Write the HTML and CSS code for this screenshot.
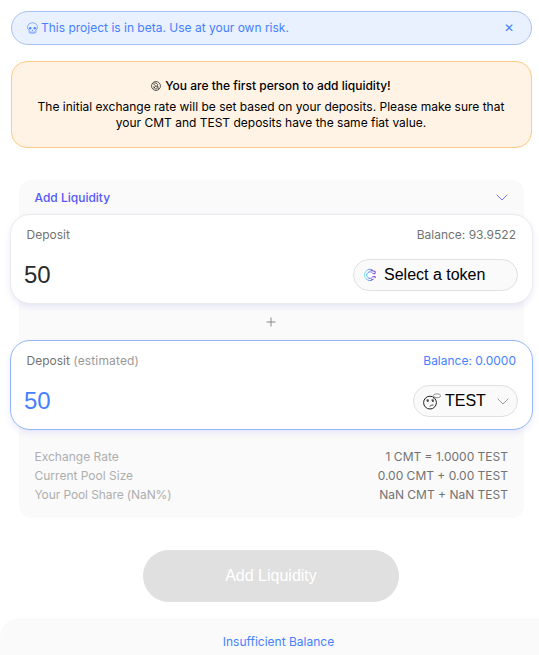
FILE: index.html
```html
<!DOCTYPE html>
<html lang="en">
<head>
<meta charset="utf-8">
<title>Add Liquidity</title>
<link rel="stylesheet" href="styles.css">
</head>
<body>
<main class="page">
  <div class="beta">
    <div class="beta-text">
      <svg class="skull" viewBox="0 0 11 12" fill="none" stroke="currentColor" stroke-width=".6"><path d="M2.3 8 1 7.2Q.3 5.8.7 4 1.7.8 5.5.7 9.3.8 10.3 4q.4 1.8-.3 3.2L8.7 8 9 10.3 7.6 11.2H3.4L2 10.3Z"/><path d="M3.4 9.3v1.4M4.8 9.6v1.3M6.2 9.6v1.3M7.6 9.3v1.4"/><path d="M2.3 5.5h1.8v1.5H2.3zM6.9 5.5h1.8v1.5H6.9zM5.2 8h.6v.6h-.6z" fill="currentColor"/></svg>
      <span>This project is in beta. Use at your own risk.</span>
    </div>
    <span class="close">✕</span>
  </div>

  <section class="notice">
    <h2 class="notice-title">
      <svg class="badge" viewBox="0 0 11 11" fill="none" stroke="currentColor" stroke-width=".7"><circle cx="5.5" cy="5.5" r="4.9"/><path d="M2 2.5 8.8 9M3 8.2 5 5.7M3.5 2.2h2l2 1.8-1 1.5L8.7 7M2.2 6.1 5 8.6H7"/></svg>
      <span>You are the first person to add liquidity!</span>
    </h2>
    <p class="notice-text">The initial exchange rate will be set based on your deposits. Please make sure that your CMT and TEST deposits have the same fiat value.</p>
  </section>

  <section class="panel">
    <header class="mode">
      <span>Add Liquidity</span>
      <svg class="chevron" viewBox="0 0 12 7" fill="none" stroke="currentColor"><path d="M.7.7 6 6 11.3.7"/></svg>
    </header>

    <div class="card">
      <div class="card-head"><span>Deposit</span><span>Balance: 93.9522</span></div>
      <div class="card-row">
        <span class="amount">50</span>
        <button class="token token-wide">
          <svg class="coin" viewBox="0 0 14 14" fill="none">
            <defs><linearGradient id="coin" x1="1" y1="7" x2="13" y2="7" gradientUnits="userSpaceOnUse"><stop stop-color="#63e1f2"/><stop offset=".5" stop-color="#527ae8"/><stop offset="1" stop-color="#8b20c9"/></linearGradient></defs>
            <circle cx="7" cy="7" r="7" fill="#fff"/>
            <path d="M9.8 2.2A5.5 5.5 0 1 0 10.4 11.2" stroke="url(#coin)" stroke-width=".9"/>
            <path d="M9.7 5.2A3.3 3.3 0 1 0 9.7 9" stroke="url(#coin)" stroke-width="1"/>
            <path d="M7.5 2.2 10.8 3.2M10.6 3.2h1.5v2.5H10M9.6 8.6h2.6v1.6M8 12.1l2.5-1" stroke="url(#coin)" stroke-width="1"/>
          </svg>
          <span>Select a token</span>
        </button>
      </div>
    </div>

    <div class="plus"><svg viewBox="0 0 10 10" stroke="currentColor"><path d="M5 .5v9M.5 5h9"/></svg></div>

    <div class="card card-active">
      <div class="card-head"><span>Deposit <span class="hint">(estimated)</span></span><span class="blue">Balance: 0.0000</span></div>
      <div class="card-row">
        <span class="amount blue">50</span>
        <button class="token">
          <svg class="face" viewBox="0 0 18 17" fill="none" stroke="#222"><circle cx="7" cy="9.6" r="6.4"/><ellipse cx="14" cy="2.8" rx="3.6" ry="2" fill="#fafafa" stroke="#777" stroke-width=".8"/><path d="m11.2 4.4-1.2 1" stroke-width=".7"/><path d="M3.2 7.2q1.3-1 2.6 0M8.3 7.2q1.3-1 2.6 0M6.7 13.4q1.8-1.7 3.8-1.4" stroke-width=".8"/><path d="M3.9 7.3h1.7v1.4H3.9zM9 7.3h1.7v1.4H9z" fill="#222" stroke="none"/></svg>
          <span>TEST</span>
          <svg class="chevron token-chevron" viewBox="0 0 12 7" fill="none" stroke="currentColor"><path d="M.7.7 6 6 11.3.7"/></svg>
        </button>
      </div>
    </div>

    <dl class="summary">
      <div><dt>Exchange Rate</dt><dd>1 CMT = 1.0000 TEST</dd></div>
      <div><dt>Current Pool Size</dt><dd>0.00 CMT + 0.00 TEST</dd></div>
      <div><dt class="share">Your Pool Share (NaN%)</dt><dd>NaN CMT + NaN TEST</dd></div>
    </dl>
  </section>

  <button class="submit">Add Liquidity</button>
</main>
<footer class="status">Insufficient Balance</footer>
</body>
</html>
```
FILE: styles.css
```css
* { box-sizing: border-box; }
body {
  margin: 0;
  height: 655px;
  overflow: hidden;
  background: #fff;
  color: #000;
  font: 12px/16px Inter, "Liberation Sans", sans-serif;
}
.page { display: flex; flex-direction: column; padding: 11px 7px 0 11px; }
.beta {
  display: flex;
  align-items: center;
  justify-content: space-between;
  height: 34px;
  padding: 0 17px 0 15px;
  border: 1px solid #a6c3fc;
  border-radius: 17px;
  background: #e9f1ff;
  color: #4680fd;
}
.beta-text { display: flex; align-items: center; gap: 3px; }
.skull { width: 11px; height: 12px; }
.close { font-family: "DejaVu Sans", sans-serif; font-size: 12px; }
.notice {
  height: 87px;
  margin-top: 16px;
  padding: 16px 24.5px 16px 23.5px;
  border: 1px solid #fdcb86;
  border-radius: 16px;
  background: #fff3e6;
  text-align: center;
}
.notice-title {
  display: flex;
  align-items: center;
  justify-content: center;
  gap: 4px;
  margin: 0 0 5px;
  font-size: 12px;
  font-weight: 500;
}
.badge { width: 10px; height: 10px; }
.notice-text { margin: 0; }
.panel {
  height: 338px;
  margin: 32px 8px 0;
  border-radius: 12px;
  background: #fafafa;
}
.mode {
  display: flex;
  align-items: center;
  justify-content: space-between;
  height: 34px;
  padding: 1px 16px 0 15.5px;
  color: #5457f6;
  font-weight: 500;
}
.chevron { width: 12px; height: 7px; stroke-width: .8; }
.card {
  height: 90px;
  margin: 0 -9px;
  padding: 12px 14px 12px 15px;
  border: 1px solid #e9e9ee;
  border-radius: 20px;
  background: #fff;
  box-shadow: 0 3px 6px rgba(60, 60, 220, .1);
}
.card-active { border-color: #95b6fc; }
.card-head { display: flex; justify-content: space-between; padding: 0 2px 0 .5px; color: #737373; }
.hint { color: #999; letter-spacing: .15px; }
.card-row { display: flex; align-items: center; justify-content: space-between; margin-top: 16px; }
.amount { color: #2b2b2b; font: 24px/32px "Liberation Sans", sans-serif; margin-left: -2px; }
.card .blue { color: #4680fd; }
.token {
  display: flex;
  align-items: center;
  height: 32px;
  width: 105px;
  padding: 0 8px 0 9px;
  border: 1px solid #e0e0e0;
  border-radius: 16px;
  background: #fafafa;
  color: #000;
  font: 16px/30px "Liberation Sans", sans-serif;
}
.token-wide { width: 165px; }
.coin { width: 14px; height: 14px; margin-right: 7px; }
.face { width: 18px; height: 17px; margin-right: 4px; }
.token-chevron { margin-left: auto; color: #888; }
.plus {
  display: flex;
  align-items: center;
  justify-content: center;
  height: 36px;
  padding-right: 1px;
  color: #888;
}
.plus svg { width: 10px; height: 10px; }
.summary { margin: 0; padding: 17px 16px 0 15.5px; }
.summary div { display: flex; justify-content: space-between; height: 19px; line-height: 19px; }
.summary dt { color: #aeaeae; }
.summary .share { letter-spacing: -.1px; }
.summary dd { margin: 0; color: #737373; }
.submit {
  align-self: center;
  width: 256px;
  height: 52px;
  margin: 32px 1px 0 0;
  border: 0;
  border-radius: 26px;
  background: #e0e0e0;
  color: #fff;
  font: 16px "Liberation Sans", sans-serif;
}
.status {
  height: 60px;
  margin-top: 16px;
  padding: 16px 0 0 18px;
  border-radius: 20px 0 0 0;
  background: #fafafa;
  color: #4680fd;
  text-align: center;
}
```
